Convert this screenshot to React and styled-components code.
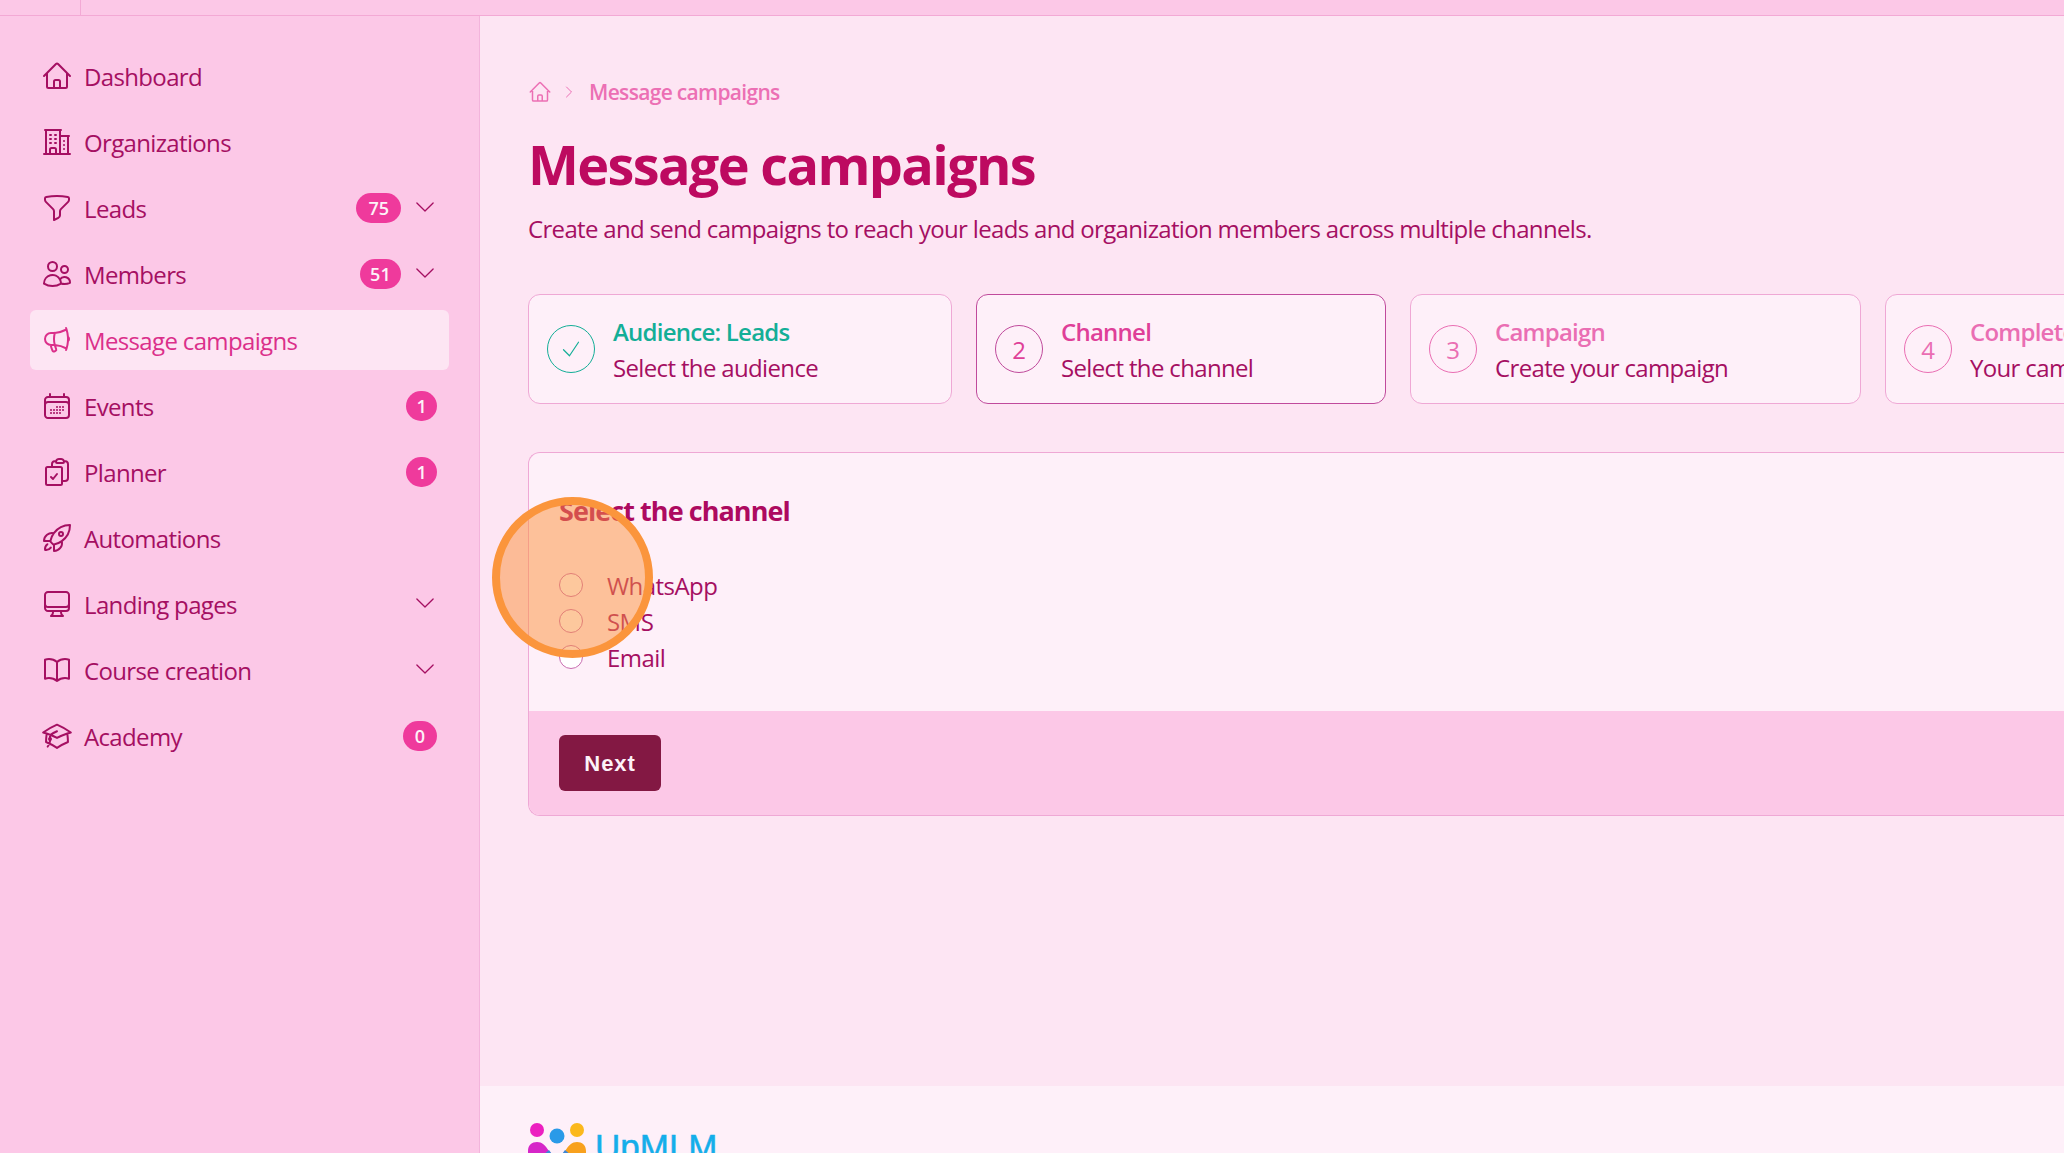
import styled, { createGlobalStyle } from "styled-components"
import {
  HiOutlineHome,
  HiOutlineBuildingOffice2,
  HiOutlineFunnel,
  HiOutlineUsers,
  HiOutlineMegaphone,
  HiOutlineCalendarDays,
  HiOutlineClipboardDocumentCheck,
  HiOutlineRocketLaunch,
  HiOutlineComputerDesktop,
  HiOutlineBookOpen,
  HiOutlineAcademicCap,
  HiOutlineChevronDown,
  HiOutlineChevronRight,
  HiOutlineCheck,
} from "react-icons/hi2"

const GlobalStyle = createGlobalStyle`
  html, body {
    margin: 0;
    height: 100%;
    overflow: hidden;
  }
  body {
    font-family: "Open Sans", "Noto Sans", "Liberation Sans", sans-serif;
    background: #fde5f3;
  }
  * {
    box-sizing: border-box;
  }
`

const Page = styled.div`
  width: 2064px;
  height: 1153px;
  display: flex;
  flex-direction: column;
  overflow: hidden;
  position: relative;
`
const TopBar = styled.div`
  height: 16px;
  flex-shrink: 0;
  background: #fcc8e7;
  border-bottom: 1px solid #f3a9d5;
`
const TopDivider = styled.div`
  width: 81px;
  height: 15px;
  border-right: 1px solid #f3a9d5;
`
const Body = styled.div`
  flex: 1;
  display: flex;
  min-height: 0;
`
const Sidebar = styled.nav`
  width: 480px;
  flex-shrink: 0;
  background: #fcc8e7;
  border-right: 1px solid #f3b4dc;
  padding: 30px 30px 0;
  display: flex;
  flex-direction: column;
  gap: 6px;
`
const NavItem = styled.div`
  height: 60px;
  display: flex;
  align-items: center;
  padding: 0 11px;
  gap: 11px;
  border-radius: 6px;
  font-size: 24px;
  color: ${(p) => (p.$active ? "#db2f8a" : "#a50f62")};
  background: ${(p) => (p.$active ? "#fde5f3" : "transparent")};
  svg {
    flex-shrink: 0;
  }
`
const NavLabel = styled.span`
  flex: 1;
  letter-spacing: -0.65px;
`
const Badge = styled.span`
  height: 30px;
  min-width: 30px;
  padding: 0 ${(p) => (p.$tight ? "10.3px" : "12px")};
  border-radius: 15px;
  background: #ef3a9c;
  color: #fdf2f8;
  font-size: 18px;
  font-weight: 600;
  display: flex;
  align-items: center;
  justify-content: center;
  transform: translateX(${(p) => (p.$arrow ? "0" : "-1px")});
`
const Arrow = styled(HiOutlineChevronDown)`
  color: #a50f62;
  margin-top: -2px;
`
const Main = styled.main`
  flex: 1;
  min-width: 0;
  display: flex;
  flex-direction: column;
`
const Content = styled.div`
  flex: 1;
  padding: 60px 0 0 48px;
  overflow: hidden;
`
const Breadcrumb = styled.div`
  display: flex;
  align-items: center;
  height: 32px;
  color: #ec6fb4;
  font-size: 21px;
  font-weight: 600;
  letter-spacing: -0.68px;
  svg {
    flex-shrink: 0;
  }
`
const CrumbArrow = styled(HiOutlineChevronRight)`
  margin: 0 12px 0 9px;
`
const Title = styled.h1`
  margin: 20px 0 0;
  font-size: 54px;
  line-height: 72px;
  font-weight: 700;
  color: #bd0a60;
  letter-spacing: -1.65px;
`
const Subtitle = styled.p`
  margin: 11px 0 0;
  font-size: 24px;
  line-height: 36px;
  color: #a50f62;
  letter-spacing: -0.67px;
  white-space: nowrap;
`
const Steps = styled.div`
  display: flex;
  gap: 24px;
  margin-top: 47px;
`
const Step = styled.div`
  height: 110px;
  flex-shrink: 0;
  width: ${(p) => p.$width}px;
  display: flex;
  align-items: center;
  gap: 18px;
  padding: 0 18px;
  background: #fef0f9;
  border: 1px solid ${(p) => (p.$current ? "#c04a9c" : "#efa8d5")};
  border-radius: 12px;
`
const StepCircle = styled.div`
  flex: 0 0 48px;
  height: 48px;
  border-radius: 50%;
  display: flex;
  align-items: center;
  justify-content: center;
  font-size: 24px;
  border: 1px solid ${(p) => p.$border};
  color: ${(p) => p.$color};
`
const StepText = styled.div`
  display: flex;
  flex-direction: column;
  margin-top: 2px;
  white-space: nowrap;
`
const StepName = styled.div`
  font-size: 24px;
  line-height: 36px;
  font-weight: 600;
  letter-spacing: -0.76px;
  color: ${(p) => p.$color};
`
const StepHint = styled.div`
  font-size: 24px;
  line-height: 36px;
  letter-spacing: -0.65px;
  color: #a50f62;
`
const Card = styled.section`
  margin-top: 48px;
  border: 1px solid #efa8d5;
  border-right: 0;
  border-radius: 12px 0 0 12px;
  overflow: hidden;
  background: #fef0f9;
`
const CardBody = styled.div`
  height: 258px;
  padding: 40px 30px 0;
`
const CardTitle = styled.h2`
  margin: 0;
  font-size: 27px;
  line-height: 36px;
  font-weight: 700;
  letter-spacing: -0.94px;
  color: #ad0a60;
`
const RadioList = styled.div`
  margin-top: 38px;
  display: flex;
  flex-direction: column;
`
const RadioRow = styled.label`
  height: 36px;
  display: flex;
  align-items: center;
  gap: 24px;
  font-size: 24px;
  letter-spacing: -0.55px;
  color: #a50f62;
`
const RadioDot = styled.span`
  width: 24px;
  height: 24px;
  border-radius: 50%;
  background: #fff;
  border: 1px solid #c86cb0;
`
const CardFooter = styled.div`
  height: 104px;
  padding: 24px 30px;
  background: #fcc8e7;
`
const NextButton = styled.button`
  width: 102px;
  height: 56px;
  padding: 2px 0 0;
  border: none;
  border-radius: 6px;
  background: #831843;
  color: #fdf2f8;
  font-family: "Liberation Sans", sans-serif;
  font-size: 22px;
  font-weight: 700;
  letter-spacing: 0.9px;
`
const Footer = styled.footer`
  height: 67px;
  flex-shrink: 0;
  background: #fef0f9;
  padding: 37px 0 0 48px;
  overflow: hidden;
  display: flex;
  gap: 7px;
`
const LogoText = styled.span`
  font-family: "Liberation Sans", sans-serif;
  font-size: 35px;
  line-height: 40px;
  margin-top: 4px;
  color: #14aeea;
  -webkit-text-stroke: 0.5px #14aeea;
`
const Spotlight = styled.div`
  position: absolute;
  left: 492px;
  top: 497px;
  width: 161px;
  height: 161px;
  border-radius: 50%;
  border: 8px solid #fb953c;
  background: rgba(251, 146, 60, 0.5);
`

const Logo = () => (
  <svg width="60" height="45" viewBox="0 0 60 45" fill="none">
    <circle cx="9" cy="7" r="7" fill="#ec1fc0" />
    <circle cx="29" cy="13" r="7.5" fill="#2a9ae8" />
    <circle cx="49" cy="7" r="7" fill="#fbb81c" />
    <path d="M0 45V28c0-6 4-9 9-9s8 3 12 9l8 10v7z" fill="#d626c8" />
    <path d="M58 45V28c0-6-4-9-9-9s-8 3-12 9l-8 10v7z" fill="#f8a11e" />
    <path d="M21 27l8 11 8-11 6 5-14 13-14-13z" fill="#3d86d8" />
  </svg>
)

const navItems = [
  { label: "Dashboard", Icon: HiOutlineHome },
  { label: "Organizations", Icon: HiOutlineBuildingOffice2 },
  { label: "Leads", Icon: HiOutlineFunnel, badge: 75, arrow: true },
  { label: "Members", Icon: HiOutlineUsers, badge: 51, arrow: true },
  { label: "Message campaigns", Icon: HiOutlineMegaphone, active: true },
  { label: "Events", Icon: HiOutlineCalendarDays, badge: 1 },
  { label: "Planner", Icon: HiOutlineClipboardDocumentCheck, badge: 1 },
  { label: "Automations", Icon: HiOutlineRocketLaunch },
  { label: "Landing pages", Icon: HiOutlineComputerDesktop, arrow: true },
  { label: "Course creation", Icon: HiOutlineBookOpen, arrow: true },
  { label: "Academy", Icon: HiOutlineAcademicCap, badge: 0 },
]

const steps = [
  { name: "Audience: Leads", hint: "Select the audience", width: 424, color: "#14ae97", border: "#14ae97", done: true },
  { name: "Channel", hint: "Select the channel", width: 410, color: "#df3f98", border: "#c04a9c", current: true, num: 2 },
  { name: "Campaign", hint: "Create your campaign", width: 451, color: "#ea6eb3", border: "#ea6eb3", num: 3 },
  { name: "Complete", hint: "Your campaign is ready", width: 451, color: "#ea6eb3", border: "#ea6eb3", num: 4 },
]

const App = () => {
  return (
    <Page>
      <GlobalStyle />
      <TopBar>
        <TopDivider />
      </TopBar>
      <Body>
        <Sidebar>
          {navItems.map(({ label, Icon, badge, arrow, active }) => (
            <NavItem key={label} $active={active}>
              <Icon size={32} />
              <NavLabel>{label}</NavLabel>
              {badge !== undefined && (
                <Badge $arrow={arrow} $tight={String(badge).includes("1")}>
                  {badge}
                </Badge>
              )}
              {arrow && <Arrow size={26} strokeWidth={1.2} />}
            </NavItem>
          ))}
        </Sidebar>
        <Main>
          <Content>
            <Breadcrumb>
              <HiOutlineHome size={24} />
              <CrumbArrow size={16} />
              Message campaigns
            </Breadcrumb>
            <Title>Message campaigns</Title>
            <Subtitle>Create and send campaigns to reach your leads and organization members across multiple channels.</Subtitle>
            <Steps>
              {steps.map((s) => (
                <Step key={s.name} $width={s.width} $current={s.current}>
                  <StepCircle $color={s.color} $border={s.border}>
                    {s.done ? <HiOutlineCheck size={24} strokeWidth={1.2} /> : s.num}
                  </StepCircle>
                  <StepText>
                    <StepName $color={s.color}>{s.name}</StepName>
                    <StepHint>{s.hint}</StepHint>
                  </StepText>
                </Step>
              ))}
            </Steps>
            <Card>
              <CardBody>
                <CardTitle>Select the channel</CardTitle>
                <RadioList>
                  {["WhatsApp", "SMS", "Email"].map((c) => (
                    <RadioRow key={c}>
                      <RadioDot />
                      {c}
                    </RadioRow>
                  ))}
                </RadioList>
              </CardBody>
              <CardFooter>
                <NextButton>Next</NextButton>
              </CardFooter>
            </Card>
          </Content>
          <Footer>
            <Logo />
            <LogoText>UpMLM</LogoText>
          </Footer>
        </Main>
      </Body>
      <Spotlight />
    </Page>
  )
}

export default App
